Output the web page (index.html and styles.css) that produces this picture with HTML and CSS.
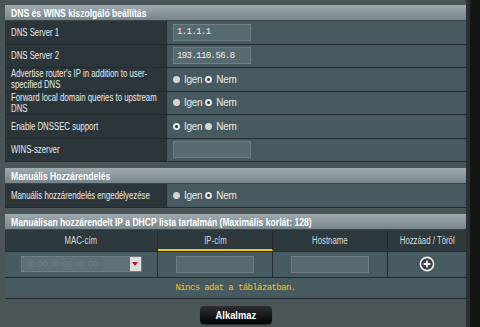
FILE: index.html
```html
<!DOCTYPE html>
<html lang="hu">
<head>
  <meta charset="UTF-8">
  <title>LAN - DHCP</title>
  <link rel="stylesheet" href="styles.css">
</head>
<body>
<div class="page">
  <div class="panel">
    <div class="title"><span>DNS és WINS kiszolgáló beállítás</span></div>
    <div class="row">
      <div class="label"><span>DNS Server 1</span></div>
      <div class="value"><input class="text" type="text" value="1.1.1.1"></div>
    </div>
    <div class="row">
      <div class="label"><span>DNS Server 2</span></div>
      <div class="value"><input class="text" type="text" value="193.110.56.8"></div>
    </div>
    <div class="row">
      <div class="label"><span>Advertise router's IP in addition to user-specified DNS</span></div>
      <div class="value">
        <label><input type="radio" name="adv">Igen</label>
        <label><input type="radio" name="adv" checked>Nem</label>
      </div>
    </div>
    <div class="row">
      <div class="label"><span>Forward local domain queries to upstream DNS</span></div>
      <div class="value">
        <label><input type="radio" name="fwd">Igen</label>
        <label><input type="radio" name="fwd" checked>Nem</label>
      </div>
    </div>
    <div class="row">
      <div class="label"><span>Enable DNSSEC support</span></div>
      <div class="value">
        <label><input type="radio" name="sec" checked>Igen</label>
        <label><input type="radio" name="sec">Nem</label>
      </div>
    </div>
    <div class="row">
      <div class="label"><span>WINS-szerver</span></div>
      <div class="value"><input class="text" type="text" value=""></div>
    </div>
  </div>

  <div class="panel">
    <div class="title"><span>Manuális Hozzárendelés</span></div>
    <div class="row">
      <div class="label"><span>Manuális hozzárendelés engedélyezése</span></div>
      <div class="value">
        <label><input type="radio" name="man">Igen</label>
        <label><input type="radio" name="man" checked>Nem</label>
      </div>
    </div>
  </div>

  <div class="panel">
    <div class="title"><span>Manuálisan hozzárendelt IP a DHCP lista tartalmán (Maximális korlát: 128)</span></div>
    <div class="grid head">
      <div><span>MAC-cím</span></div>
      <div class="active"><span>IP-cím</span></div>
      <div><span>Hostname</span></div>
      <div><span>Hozzáad / Töröl</span></div>
    </div>
    <div class="grid inputs">
      <div>
        <div class="select">
          <span class="select-box">00:00:00:00:00:00</span>
          <span class="select-arrow"></span>
        </div>
      </div>
      <div><input class="text" type="text"></div>
      <div><input class="text" type="text"></div>
      <div>
        <svg class="add" width="16" height="16" viewBox="0 0 16 16">
          <circle cx="8" cy="8" r="6.6" fill="#3a4245" stroke="#eeeeee" stroke-width="1.6"/>
          <path d="M8 4.5v7M4.5 8h7" stroke="#eeeeee" stroke-width="1.8"/>
        </svg>
      </div>
    </div>
    <div class="empty">Nincs adat a táblázatban.</div>
  </div>

  <div class="actions">
    <a href="javascript:void(0);" class="button"><span>Alkalmaz</span></a>
  </div>
</div>
</body>
</html>
```

FILE: styles.css
```css
* {
  margin: 0;
  padding: 0;
  box-sizing: border-box;
}
html, body {
  width: 100%;
  height: 100%;
  background-color: #141616;
  font-family: "Liberation Sans", Arial, sans-serif;
  font-size: 10px;
  color: #e8eaea;
  overflow: hidden;
}
.title span,
.label span,
.head span,
.button span {
  display: inline-block;
  transform: scaleX(0.78);
  white-space: nowrap;
}
.page {
  width: 470px;
  height: 100%;
  background-color: #4b5457;
  border-right: 4px solid #2a3033;
  padding: 5px 0 0 5px;
}
.panel {
  width: 461px;
  margin-bottom: 6px;
}
.title {
  height: 16px;
  line-height: 16px;
  padding-left: 6px;
  font-weight: bold;
  font-size: 11px;
  color: #ffffff;
  background-image: linear-gradient(#a0abaf, #77848a);
  border-bottom: 1px solid #3b4447;
}
.title span {
  transform-origin: left center;
}
.row {
  display: flex;
  height: 23.5px;
  border-bottom: 1px solid #232b2e;
}
.label {
  width: 162px;
  padding: 0 6px;
  display: flex;
  align-items: center;
  line-height: 11px;
  background-color: #2c363a;
  border-right: 1px solid #232b2e;
}
.label span {
  display: block;
  flex: none;
  width: 192px;
  white-space: normal;
  transform-origin: left center;
}
.value {
  flex: 1;
  display: flex;
  align-items: center;
  padding-left: 6px;
  background-color: #475a5f;
  letter-spacing: -0.3px;
}
.value label {
  display: flex;
  align-items: center;
}
input[type="radio"] {
  appearance: none;
  width: 7px;
  height: 7px;
  border-radius: 50%;
  margin: 0 4px 0 3px;
  background-color: #d4d6d6;
}
.value label:first-child input {
  margin-left: 0;
}
input[type="radio"]:checked {
  background-color: #2a3032;
  border: 2px solid #e4e6e6;
}
.text {
  width: 78px;
  height: 17px;
  border: 1px solid #6b7f84;
  background-color: #566a6f;
  color: #f0f0f0;
  font-family: "Liberation Mono", "Courier New", monospace;
  font-size: 9px;
  letter-spacing: -0.6px;
  padding-left: 3px;
  outline: none;
}
.grid {
  display: grid;
  grid-template-columns: 153px 115px 115px 78px;
  border-bottom: 1px solid #232b2e;
}
.grid > div {
  display: flex;
  align-items: center;
  justify-content: center;
  border-right: 1px solid #232b2e;
}
.grid > div:last-child {
  border-right: 0;
}
.head {
  height: 22px;
  background-color: #2e393d;
  color: #d8dcdc;
}
.head .active {
  border-bottom: 2px solid #f0c419;
  padding-top: 2px;
}
.inputs {
  height: 26px;
  background-color: #475a5f;
}
.select {
  display: flex;
  width: 121px;
  height: 16px;
  margin-left: 1px;
  border: 1px solid #6b7f84;
}
.select-box {
  flex: 1;
  background-color: #5d7075;
  color: #6f8186;
  font-size: 9px;
  line-height: 14px;
  padding-left: 3px;
  overflow: hidden;
}
.select-arrow {
  width: 11px;
  background-color: #dcdede;
  position: relative;
}
.select-arrow::after {
  content: "";
  position: absolute;
  left: 2px;
  top: 5px;
  border-left: 3.5px solid transparent;
  border-right: 3.5px solid transparent;
  border-top: 4px solid #c3142c;
}
.empty {
  height: 21px;
  line-height: 20px;
  text-align: center;
  background-color: #475a5f;
  border-bottom: 1px solid #232b2e;
  color: #f0c419;
  font-family: "Liberation Mono", "Courier New", monospace;
  font-size: 9px;
  letter-spacing: -0.6px;
}
.actions {
  text-align: center;
  width: 461px;
}
.button {
  display: inline-block;
  width: 72px;
  height: 18px;
  line-height: 18px;
  margin-top: 1px;
  border-radius: 4px;
  background-image: linear-gradient(#2c2f30, #050606);
  box-shadow: 0 1px 1px #2a2d2e;
  color: #ffffff;
  font-weight: bold;
  font-size: 11px;
  text-decoration: none;
}
.button span {
  transform: scaleX(0.85);
}
```
